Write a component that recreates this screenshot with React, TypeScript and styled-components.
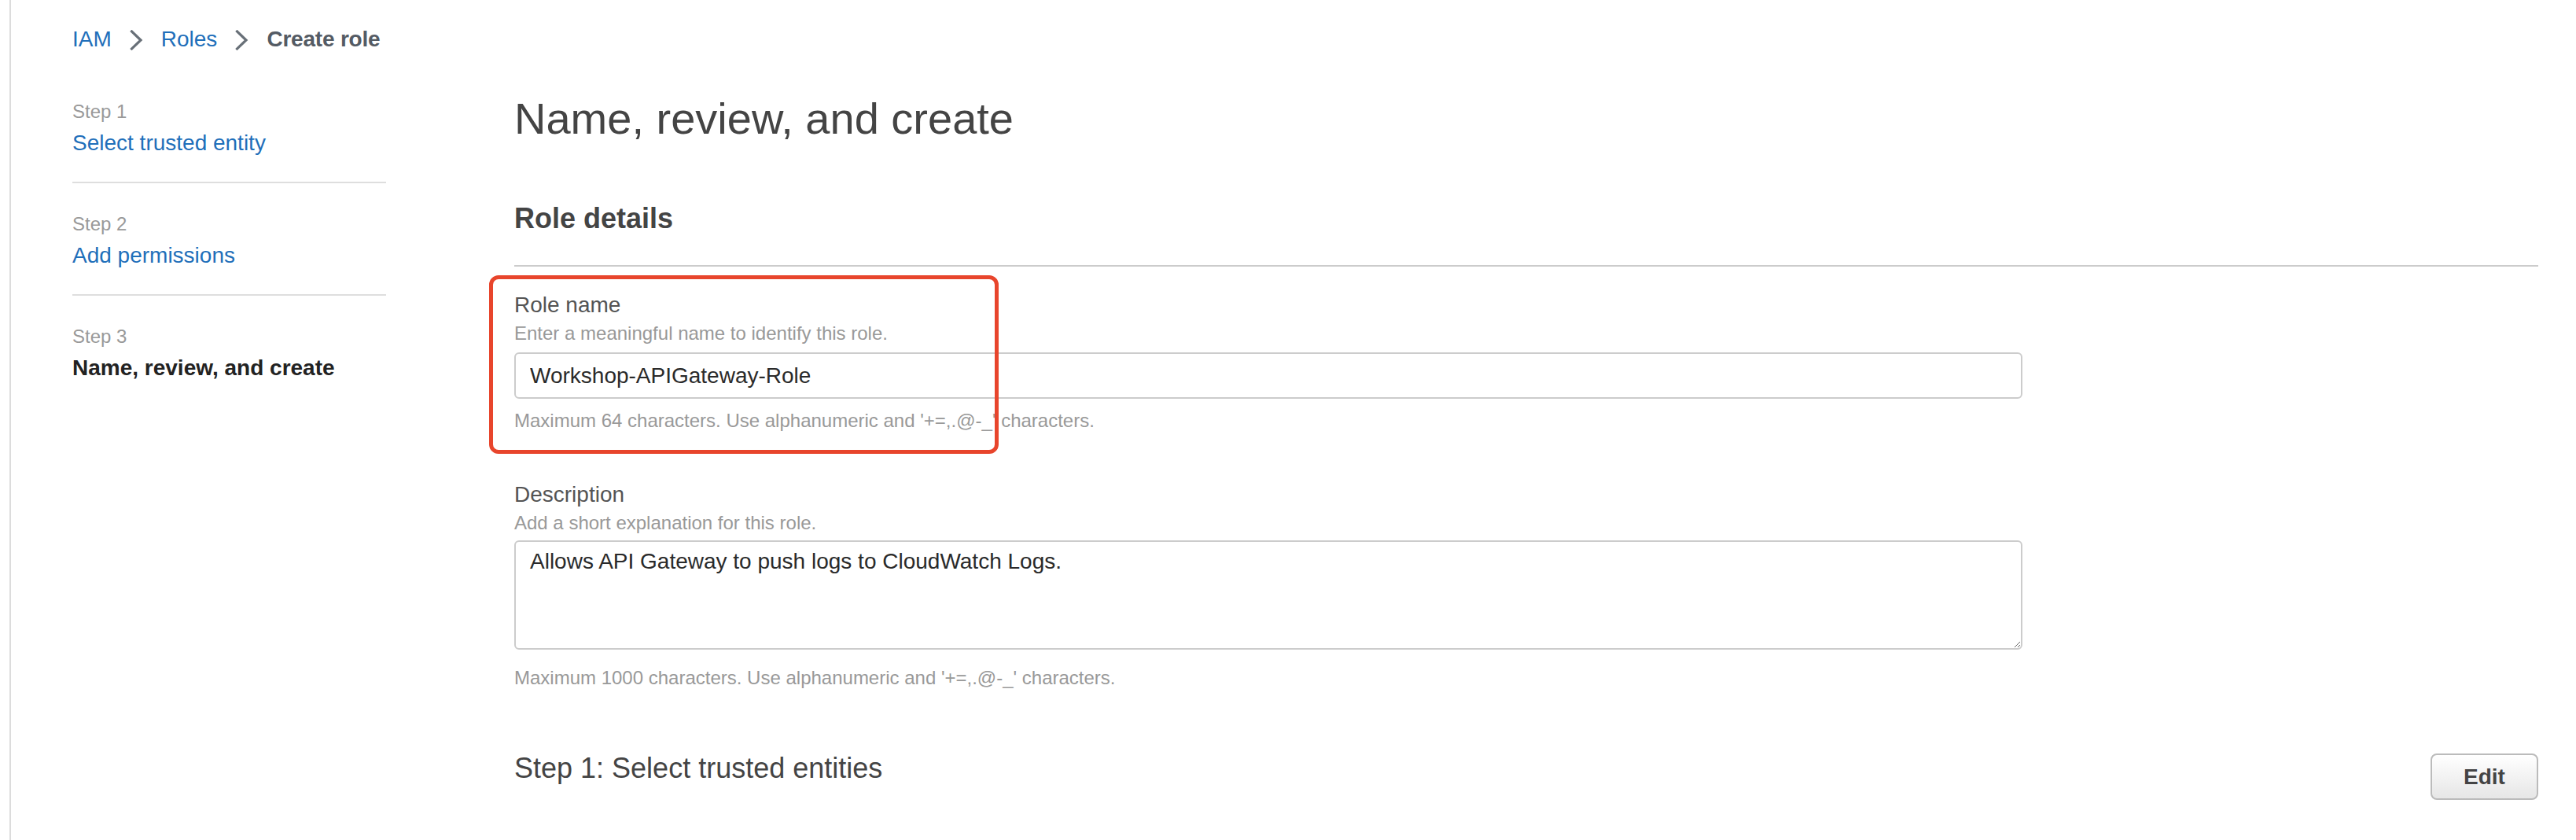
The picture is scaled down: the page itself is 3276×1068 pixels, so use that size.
import React from "react";
import styled, { createGlobalStyle } from "styled-components";

const GlobalStyle = createGlobalStyle`
  html, body {
    margin: 0;
    padding: 0;
    background: #ffffff;
  }
  body {
    font-family: "Liberation Sans", Arial, Helvetica, sans-serif;
    color: #444444;
  }
  * { box-sizing: border-box; }
`;

const Page = styled.div`
  padding-left: 12px;
  min-height: 1068px;
`;

const Shell = styled.div`
  border-left: 2px solid #dcdcdc;
  min-height: 1068px;
  padding: 30px 48px 0 78px;
`;

const Breadcrumbs = styled.nav`
  display: flex;
  align-items: center;
  gap: 23px;
  height: 40px;
  font-size: 28px;
  line-height: 40px;
`;

const Crumb = styled.a`
  color: #1f6fba;
  text-decoration: none;
`;

const CurrentCrumb = styled.span`
  color: #545b64;
  font-weight: 700;
  letter-spacing: -0.2px;
`;

const Chevron = styled.svg`
  width: 17px;
  height: 26px;
  flex: none;
  margin-top: 1px;
`;

const Columns = styled.div`
  display: grid;
  grid-template-columns: 399px 1fr;
  column-gap: 163px;
`;

const StepNav = styled.ol`
  list-style: none;
  margin: 0;
  padding: 20px 0 0 0;
`;

const NavStep = styled.li<{ $last?: boolean }>`
  padding: 36px 0 29px 0;
  border-bottom: ${(p) => (p.$last ? "none" : "2px solid #dedede")};
`;

const StepLabel = styled.div`
  font-size: 24px;
  line-height: 32px;
  color: #999999;
`;

const StepLink = styled.a<{ $active?: boolean }>`
  display: block;
  margin-top: 4px;
  font-size: 28px;
  line-height: 40px;
  text-decoration: none;
  color: ${(p) => (p.$active ? "#222222" : "#1f6fba")};
  font-weight: ${(p) => (p.$active ? 700 : 400)};
`;

const Main = styled.main`
  min-width: 0;
`;

const PageTitle = styled.h1`
  margin: 49px 0 0 0;
  font-size: 56px;
  line-height: 64px;
  font-weight: 400;
  color: #444444;
`;

const SectionHeader = styled.h2`
  margin: 73px 0 0 0;
  padding-bottom: 37px;
  border-bottom: 2px solid #cccccc;
  font-size: 36px;
  line-height: 44px;
  font-weight: 700;
  color: #444444;
`;

const Field = styled.div<{ $gap: number }>`
  position: relative;
  max-width: 1918px;
  margin-top: ${(p) => p.$gap}px;
`;

const FieldLabel = styled.label`
  display: block;
  font-size: 28px;
  line-height: 40px;
  color: #545454;
`;

const FieldHint = styled.div`
  font-size: 24px;
  line-height: 32px;
  color: #999999;
`;

const TextInput = styled.input`
  display: block;
  width: 100%;
  height: 59px;
  margin-top: 8px;
  padding: 0 18px;
  border: 2px solid #cccccc;
  border-radius: 6px;
  font-family: "Liberation Sans", Arial, Helvetica, sans-serif;
  font-size: 28px;
  color: #2a2a2a;
  background: #ffffff;
  outline: none;
`;

const TextArea = styled.textarea`
  display: block;
  width: 100%;
  height: 139px;
  margin-top: 6px;
  padding: 5px 18px;
  border: 2px solid #cccccc;
  border-radius: 6px;
  font-family: "Liberation Sans", Arial, Helvetica, sans-serif;
  font-size: 28px;
  line-height: 40px;
  color: #2a2a2a;
  background: #ffffff;
  resize: vertical;
  outline: none;
`;

const FieldConstraint = styled.div<{ $gap: number }>`
  margin-top: ${(p) => p.$gap}px;
  font-size: 24px;
  line-height: 32px;
  color: #999999;
`;

const Highlight = styled.div`
  position: absolute;
  left: -32px;
  top: -18px;
  width: 648px;
  height: 227px;
  border: 5px solid #e8452c;
  border-radius: 12px;
  pointer-events: none;
`;

const StepSection = styled.div`
  display: flex;
  justify-content: space-between;
  align-items: flex-start;
  margin-top: 77px;
`;

const StepTitle = styled.h2`
  margin: 0;
  font-size: 36px;
  line-height: 44px;
  font-weight: 400;
  color: #444444;
`;

const EditButton = styled.button`
  width: 137px;
  height: 59px;
  margin-top: 3px;
  border: 2px solid #bbbbbb;
  border-radius: 8px;
  background: linear-gradient(#ffffff, #e6e6e6);
  font-family: "Liberation Sans", Arial, Helvetica, sans-serif;
  font-size: 28px;
  font-weight: 700;
  color: #444444;
  cursor: pointer;
`;

const ChevronIcon = () => (
  <Chevron viewBox="0 0 17 26" fill="none">
    <path d="M2.5 2 L14 13 L2.5 24" stroke="#687078" strokeWidth="3.2" strokeLinecap="square" />
  </Chevron>
);

const steps = [
  { label: "Step 1", title: "Select trusted entity" },
  { label: "Step 2", title: "Add permissions" },
  { label: "Step 3", title: "Name, review, and create", active: true },
];

export default function App() {
  return (
    <>
      <GlobalStyle />
      <Page>
        <Shell>
          <Breadcrumbs>
            <Crumb href="#">IAM</Crumb>
            <ChevronIcon />
            <Crumb href="#">Roles</Crumb>
            <ChevronIcon />
            <CurrentCrumb>Create role</CurrentCrumb>
          </Breadcrumbs>
          <Columns>
            <StepNav>
              {steps.map((s, i) => (
                <NavStep key={s.label} $last={i === steps.length - 1}>
                  <StepLabel>{s.label}</StepLabel>
                  <StepLink href="#" $active={s.active}>
                    {s.title}
                  </StepLink>
                </NavStep>
              ))}
            </StepNav>
            <Main>
              <PageTitle>Name, review, and create</PageTitle>
              <SectionHeader>Role details</SectionHeader>
              <Field $gap={29}>
                <Highlight />
                <FieldLabel>Role name</FieldLabel>
                <FieldHint>Enter a meaningful name to identify this role.</FieldHint>
                <TextInput defaultValue="Workshop-APIGateway-Role" />
                <FieldConstraint $gap={12}>
                  Maximum 64 characters. Use alphanumeric and '+=,.@-_' characters.
                </FieldConstraint>
              </Field>
              <Field $gap={58}>
                <FieldLabel>Description</FieldLabel>
                <FieldHint>Add a short explanation for this role.</FieldHint>
                <TextArea defaultValue="Allows API Gateway to push logs to CloudWatch Logs." />
                <FieldConstraint $gap={20}>
                  Maximum 1000 characters. Use alphanumeric and '+=,.@-_' characters.
                </FieldConstraint>
              </Field>
              <StepSection>
                <StepTitle>Step 1: Select trusted entities</StepTitle>
                <EditButton>Edit</EditButton>
              </StepSection>
            </Main>
          </Columns>
        </Shell>
      </Page>
    </>
  );
}
